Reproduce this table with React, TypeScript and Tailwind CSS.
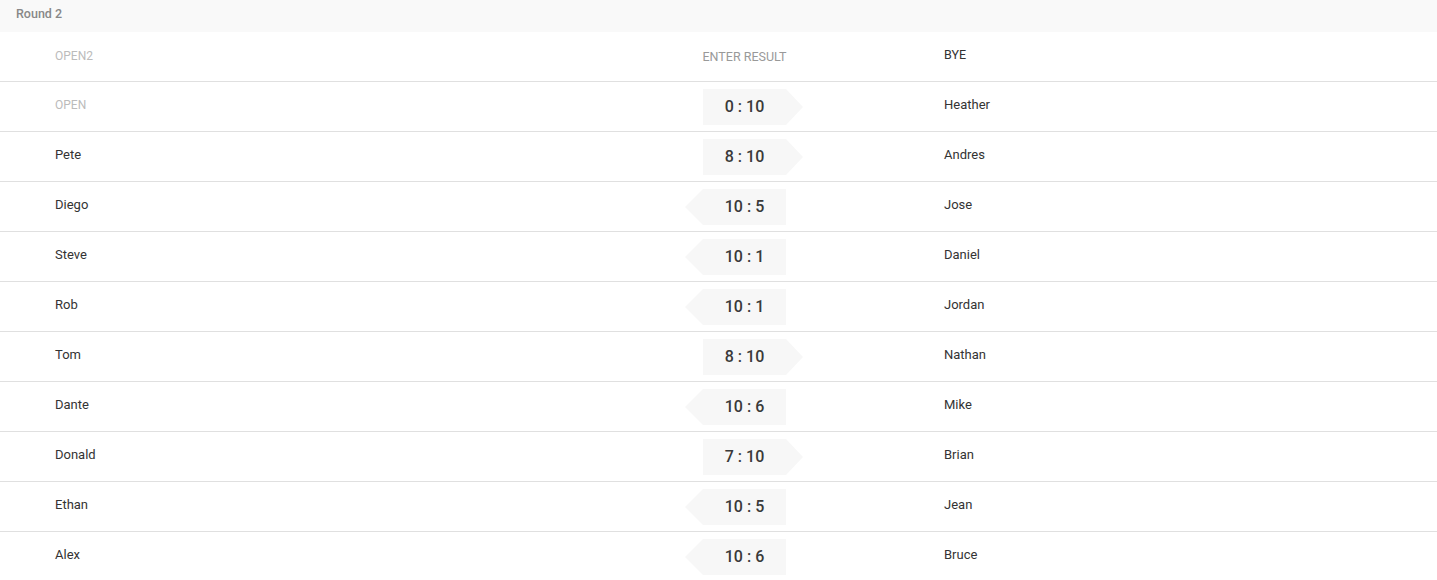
type Match = {
  home: string;
  away: string;
  score?: string;
  // which side the arrow points to
  dir?: "left" | "right";
  placeholder?: boolean;
};

const matches: Match[] = [
  { home: "OPEN", away: "Heather", score: "0 : 10", dir: "right", placeholder: true },
  { home: "Pete", away: "Andres", score: "8 : 10", dir: "right" },
  { home: "Diego", away: "Jose", score: "10 : 5", dir: "left" },
  { home: "Steve", away: "Daniel", score: "10 : 1", dir: "left" },
  { home: "Rob", away: "Jordan", score: "10 : 1", dir: "left" },
  { home: "Tom", away: "Nathan", score: "8 : 10", dir: "right" },
  { home: "Dante", away: "Mike", score: "10 : 6", dir: "left" },
  { home: "Donald", away: "Brian", score: "7 : 10", dir: "right" },
  { home: "Ethan", away: "Jean", score: "10 : 5", dir: "left" },
  { home: "Alex", away: "Bruce", score: "10 : 6", dir: "left" },
];

const ScoreBox = ({ score, dir }: { score: string; dir?: "left" | "right" }) => (
  <div className="flex items-center">
    {dir === "left" ? (
      <div className="w-0 h-0 border-y-[18px] border-y-transparent border-r-[18px] border-r-[#f7f7f7]" />
    ) : (
      <div className="w-[18px]" />
    )}
    <div className="w-[83px] h-[36px] bg-[#f7f7f7] flex items-center justify-center text-[16px] font-medium text-[#3a3a3a]">
      {score}
    </div>
    {dir === "right" && (
      <div className="w-0 h-0 border-y-[18px] border-y-transparent border-l-[17px] border-l-[#f7f7f7]" />
    )}
  </div>
);

export default function App() {
  return (
    <div className="w-[1437px] h-[580px] overflow-hidden bg-white font-['Roboto',sans-serif]">
      <div className="h-[32px] bg-[#f9f9f9] pl-4 pt-[5px] text-[12.5px] font-medium text-[#888]">
        Round 2
      </div>

      {/* bye row */}
      <div className="flex items-center h-[50px] border-b border-[#e0e0e0]">
        <div className="w-[685px] pl-[55px] pb-[2px] text-[12px] text-[#bbb]">OPEN2</div>
        <div className="w-[118px] pl-[14px]">
          <div className="w-[91px] text-center text-[12.5px] text-[#999] pt-[1px]">ENTER RESULT</div>
        </div>
        <div className="pl-[141px] pb-[2px] text-[12.5px] text-[#333]">BYE</div>
      </div>

      {matches.map((m, i) => (
        <div key={i} className="flex items-center h-[50px] border-b border-[#e0e0e0]">
          <div
            className={
              m.placeholder
                ? "w-[685px] pl-[55px] pb-[3px] text-[12px] text-[#bbb]"
                : "w-[685px] pl-[55px] pb-[3px] text-[13px] text-[#333]"
            }
          >
            {m.home}
          </div>
          <div className="w-[118px]">{m.score && <ScoreBox score={m.score} dir={m.dir} />}</div>
          <div className="pl-[141px] pb-[3px] text-[13px] text-[#333]">{m.away}</div>
        </div>
      ))}
    </div>
  );
}
